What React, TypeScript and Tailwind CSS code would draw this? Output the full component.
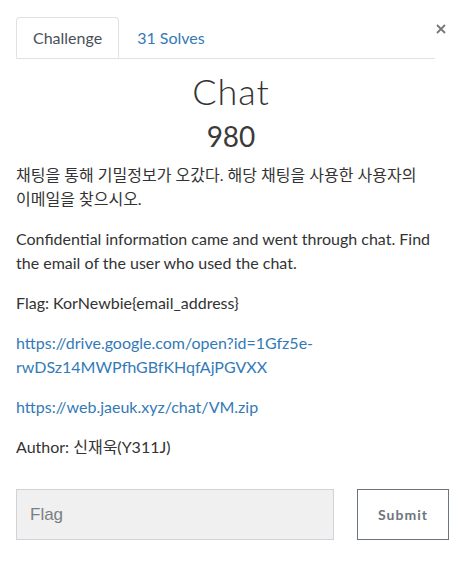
import React from 'react';

export default function App() {
    return (
        <div className="min-h-screen bg-white font-['Lato','Noto_Sans_CJK_KR',sans-serif] text-[#333]">
            <div className="pl-4 pt-[17px] w-[446px]">
                {/* Tabs */}
                <div className="flex items-start">
                    <div className="flex w-[420px] border-b border-[#dee2e6]">
                        <div className="-mb-px px-4 h-[41px] flex items-center border border-[#dee2e6] border-b-white rounded-t-[4px] bg-white text-[16px] text-[#495057]">
                            Challenge
                        </div>
                        <div className="px-[18px] h-[41px] flex items-center text-[16px] text-[#337ab7]">
                            31 Solves
                        </div>
                    </div>
                    <button className="ml-[1px] mt-[7px]">
                        <svg width="10" height="10" viewBox="0 0 10 10">
                            <path d="M1 1L9 9M9 1L1 9" stroke="#777" strokeWidth="1.8" />
                        </svg>
                    </button>
                </div>

                {/* Title */}
                <h2 className="mt-[10px] text-center text-[36px] font-light tracking-[1px] leading-[44px] text-[#333] font-['Lato_Light','Lato',sans-serif]">Chat</h2>
                <h3 className="mt-[6px] text-center text-[28px] font-normal leading-[34px] text-[#3a3a3a]">980</h3>

                {/* Description */}
                <div className="mt-[10px] text-[16px] leading-[24px] break-keep">
                    <p className="mb-4">채팅을 통해 기밀정보가 오갔다. 해당 채팅을 사용한 사용자의 이메일을 찾으시오.</p>
                    <p className="mb-4">Confidential information came and went through chat. Find the email of the user who used the chat.</p>
                    <p className="mb-4">Flag: KorNewbie{'{'}email_address{'}'}</p>
                    <p className="mb-4">
                        <a className="text-[#337ab7]">https://drive.google.com/open?id=1Gfz5e-rwDSz14MWPfhGBfKHqfAjPGVXX</a>
                    </p>
                    <p className="mb-4">
                        <a className="text-[#337ab7]">https://web.jaeuk.xyz/chat/VM.zip</a>
                    </p>
                    <p className="mb-4">Author: 신재욱(Y311J)</p>
                </div>
            </div>

            {/* Form */}
            <div className="flex items-start pl-4 mt-[30px]">
                <input
                    placeholder="Flag"
                    className="w-[318px] h-[51px] bg-[#f0f0f0] border border-[#ced4da] px-[13px] text-[17px] font-['Liberation_Sans',sans-serif] placeholder:text-[#7a7f85] outline-none"
                />
                <button className="ml-[23px] w-[92px] h-[51px] border border-[#6c757d] text-[14px] font-bold tracking-[1px] text-[#6c757d]">
                    Submit
                </button>
            </div>
        </div>
    );
}
